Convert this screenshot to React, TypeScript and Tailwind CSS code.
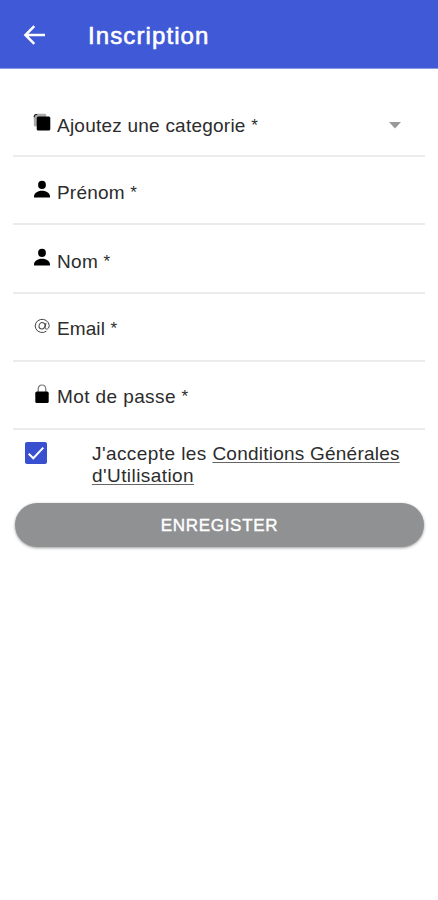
import type { ReactNode } from 'react';

type Field = {
  label: string;
  icon: ReactNode;
  select?: boolean;
  height: string;
  text: string;
};

const PersonIcon = () => (
  <svg viewBox="0 0 16 18" className="w-4 h-[18px] block" fill="#000">
    <ellipse cx="8" cy="4.9" rx="3.9" ry="4.1" />
    <path d="M0 17.5v-1.1c0-3.1 3.4-5.7 8-5.7s8 2.6 8 5.7v1.1z" />
  </svg>
);

const StackIcon = () => (
  <svg viewBox="0 0 18 18" className="w-[18px] h-[18px] block">
    <path d="M3 13.6H2.4A1.6 1.6 0 0 1 .8 12V3.2A2.4 2.4 0 0 1 3.2.8h8.6a1.6 1.6 0 0 1 1.6 1.6V3" fill="#aaa" />
    <path d="M1.3 4.2V3.5a2 2 0 0 1 2-2h.9" fill="none" stroke="#222" strokeWidth="1.2" />
    <rect x="3.7" y="3.6" width="13.6" height="14" rx="1.5" fill="#000" />
  </svg>
);

const AtIcon = () => (
  <svg viewBox="0 0 16 16" className="w-4 h-4 block" fill="none" stroke="#444" strokeWidth="1">
    <path d="M12.4 13.2A7 6.6 0 1 1 15.2 7.5c0 2.2-1.1 3.6-2.6 3.6-1.2 0-1.7-.8-1.4-2.2l.8-4.1" />
    <ellipse cx="8" cy="7.8" rx="2.9" ry="3.2" transform="rotate(20 8 7.8)" />
  </svg>
);

const LockIcon = () => (
  <svg viewBox="0 0 14 20" className="w-3.5 h-5 block">
    <path d="M3.2 9V5.1C3.2 2.8 4.8 1 7 1s3.8 1.8 3.8 4.1V9" fill="none" stroke="#777" strokeWidth="1.2" />
    <rect x="0.3" y="7.6" width="13.4" height="11.4" rx="1.6" fill="#000" />
  </svg>
);

export default function App() {
  const fields: Field[] = [
    { label: 'Ajoutez une categorie', icon: <StackIcon />, select: true, height: 'h-[66px]', text: 'tracking-[0.23px] pt-1.5' },
    { label: 'Prénom', icon: <PersonIcon />, height: 'h-[68px]', text: 'tracking-[0.2px] pt-1.5' },
    { label: 'Nom', icon: <PersonIcon />, height: 'h-[69px]', text: 'tracking-[0.3px] pt-1.5' },
    { label: 'Email', icon: <AtIcon />, height: 'h-[68px]', text: 'tracking-[0.1px] pt-1' },
    { label: 'Mot de passe', icon: <LockIcon />, height: 'h-[68px]', text: 'tracking-[0.4px] pt-1' },
  ];

  return (
    <div className="w-full h-[900px] bg-white overflow-hidden font-['Liberation_Sans',sans-serif] text-[#2c2c2c]">
      <header className="h-[69px] bg-[#4059d6] border-b border-[#8b9ae5] flex items-center pl-[23px] pt-[3px] text-white">
        <svg viewBox="0 0 22 20" className="w-[22px] h-5 mr-[43px] -mt-[2px]" fill="none" stroke="currentColor" strokeWidth="2.5">
          <path d="M22 10H2.5M11.3 1.2 2.4 10l8.9 8.8" />
        </svg>
        <h1 className="text-[24px] leading-7 tracking-[1.1px] [-webkit-text-stroke:0.6px_white]">Inscription</h1>
      </header>

      <main className="pt-[22px] px-[13px]">
        {fields.map((field) => (
          <div key={field.label} className={`${field.height} border-b-2 border-[#ebebeb] flex items-center pl-5 pr-6`}>
            <div className="w-[18px] mr-[6px] flex justify-center -mt-[3px]">{field.icon}</div>
            <span className={`text-[19px] leading-6 whitespace-pre ${field.text}`}>
              {field.label} <span className="text-[17px] leading-none align-[1px]">*</span>
            </span>
            {field.select && (
              <svg viewBox="0 0 12 7" className="w-3 h-[7px] ml-auto mt-1" fill="#999">
                <path d="M0 0h12L6 6.6z" />
              </svg>
            )}
          </div>
        ))}

        {/* Terms */}
        <div className="flex pl-3 pt-3 h-[73px]">
          <div className="w-[22px] h-[22px] bg-[#3850d0] rounded-[2px] flex items-center justify-center mr-[45px]">
            <svg viewBox="0 0 18 16" className="w-[18px] h-4" fill="none" stroke="#fff" strokeWidth="2">
              <path d="m1.7 8.7 4.6 4.5L16.3 2.6" />
            </svg>
          </div>
          <p className="text-[19px] leading-[22px] tracking-[0.42px] pt-px whitespace-nowrap">
            J'accepte les{' '}
            <span className="underline decoration-1 decoration-[#666] underline-offset-2 tracking-[0.23px]">Conditions Générales</span>
            <br />
            <span className="underline decoration-1 decoration-[#666] underline-offset-2">d'Utilisation</span>
          </p>
        </div>

        <button className="block w-[409px] h-11 ml-0.5 pt-0.5 rounded-full bg-[#8f9193] shadow-[0_1px_3px_rgba(0,0,0,0.4)] text-white text-[17px] leading-5 tracking-[0.7px] [-webkit-text-stroke:0.4px_white]">
          ENREGISTER
        </button>
      </main>
    </div>
  );
}
